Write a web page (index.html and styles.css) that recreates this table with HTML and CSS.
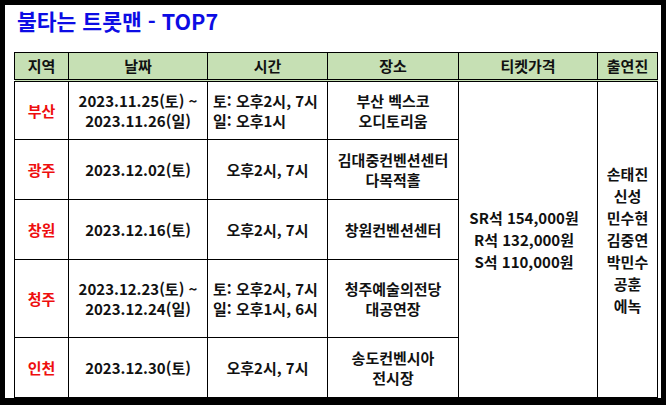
FILE: index.html
```html
<!DOCTYPE html>
<html lang="ko">
<head>
<meta charset="utf-8">
<title>불타는 트롯맨 - TOP7</title>
<link rel="stylesheet" href="styles.css">
</head>
<body>
<div class="frame">
  <h1 class="title">불타는 트롯맨 - TOP7</h1>
  <table class="schedule">
    <colgroup>
      <col class="c-region">
      <col class="c-date">
      <col class="c-time">
      <col class="c-place">
      <col class="c-price">
      <col class="c-cast">
    </colgroup>
    <thead>
      <tr class="head-row">
        <th>지역</th>
        <th>날짜</th>
        <th>시간</th>
        <th>장소</th>
        <th>티켓가격</th>
        <th>출연진</th>
      </tr>
    </thead>
    <tbody>
      <tr class="row first">
        <td class="region">부산</td>
        <td>2023.11.25(토) ~<br>2023.11.26(일)</td>
        <td class="time-left">토: 오후2시, 7시<br>일: 오후1시</td>
        <td>부산 벡스코<br>오디토리움</td>
        <td class="price" rowspan="5">SR석 154,000원<br>R석 132,000원<br>S석 110,000원</td>
        <td class="cast" rowspan="5">손태진<br>신성<br>민수현<br>김중연<br>박민수<br>공훈<br>에녹</td>
      </tr>
      <tr class="row">
        <td class="region">광주</td>
        <td>2023.12.02(토)</td>
        <td>오후2시, 7시</td>
        <td>김대중컨벤션센터<br>다목적홀</td>
      </tr>
      <tr class="row">
        <td class="region">창원</td>
        <td>2023.12.16(토)</td>
        <td>오후2시, 7시</td>
        <td>창원컨벤션센터</td>
      </tr>
      <tr class="row tall">
        <td class="region">청주</td>
        <td>2023.12.23(토) ~<br>2023.12.24(일)</td>
        <td class="time-left">토: 오후2시, 7시<br>일: 오후1시, 6시</td>
        <td>청주예술의전당<br>대공연장</td>
      </tr>
      <tr class="row">
        <td class="region">인천</td>
        <td>2023.12.30(토)</td>
        <td>오후2시, 7시</td>
        <td>송도컨벤시아<br>전시장</td>
      </tr>
    </tbody>
  </table>
</div>
</body>
</html>
```
FILE: styles.css
```css
html, body {
  margin: 0;
  padding: 0;
  background: #000;
}
body {
  width: 666px;
  height: 405px;
  overflow: hidden;
  font-family: "Noto Sans CJK KR", "Noto Sans", sans-serif;
}
.frame {
  margin: 5px 5px 0 5px;
  height: 393px;
  background: #fff;
  padding: 0 0 0 9px;
  box-sizing: border-box;
  overflow: hidden;
}
.title {
  margin: 0;
  height: 47px;
  padding: 2px 0 0 3px;
  box-sizing: border-box;
  font-size: 21.5px;
  line-height: 28px;
  font-weight: 700;
  color: #0c0ce4;
}
.schedule {
  border-collapse: collapse;
  table-layout: fixed;
  width: 643px;
  font-size: 15px;
  font-weight: 700;
  color: #111;
}
.c-region { width: 54px; }
.c-date { width: 139px; }
.c-time { width: 120px; }
.c-place { width: 131px; }
.c-price { width: 139px; }
.c-cast { width: 60px; }
.schedule th,
.schedule td {
  border: 1px solid #000;
  padding: 0;
  text-align: center;
  vertical-align: middle;
  line-height: 20px;
  white-space: nowrap;
}
.schedule th {
  background: #c6e0b4;
  font-weight: 700;
  height: 26px;
  border-bottom: 3px double #000;
}
.row { height: 60px; }
.row.first { height: 59px; }
.row.tall { height: 78px; }
.region { color: #ee0e0e; }
.time-left {
  text-align: left !important;
  padding-left: 5px !important;
}
.price,
.cast {
  line-height: 22px !important;
}
.price {
  padding-right: 8px !important;
}
```
